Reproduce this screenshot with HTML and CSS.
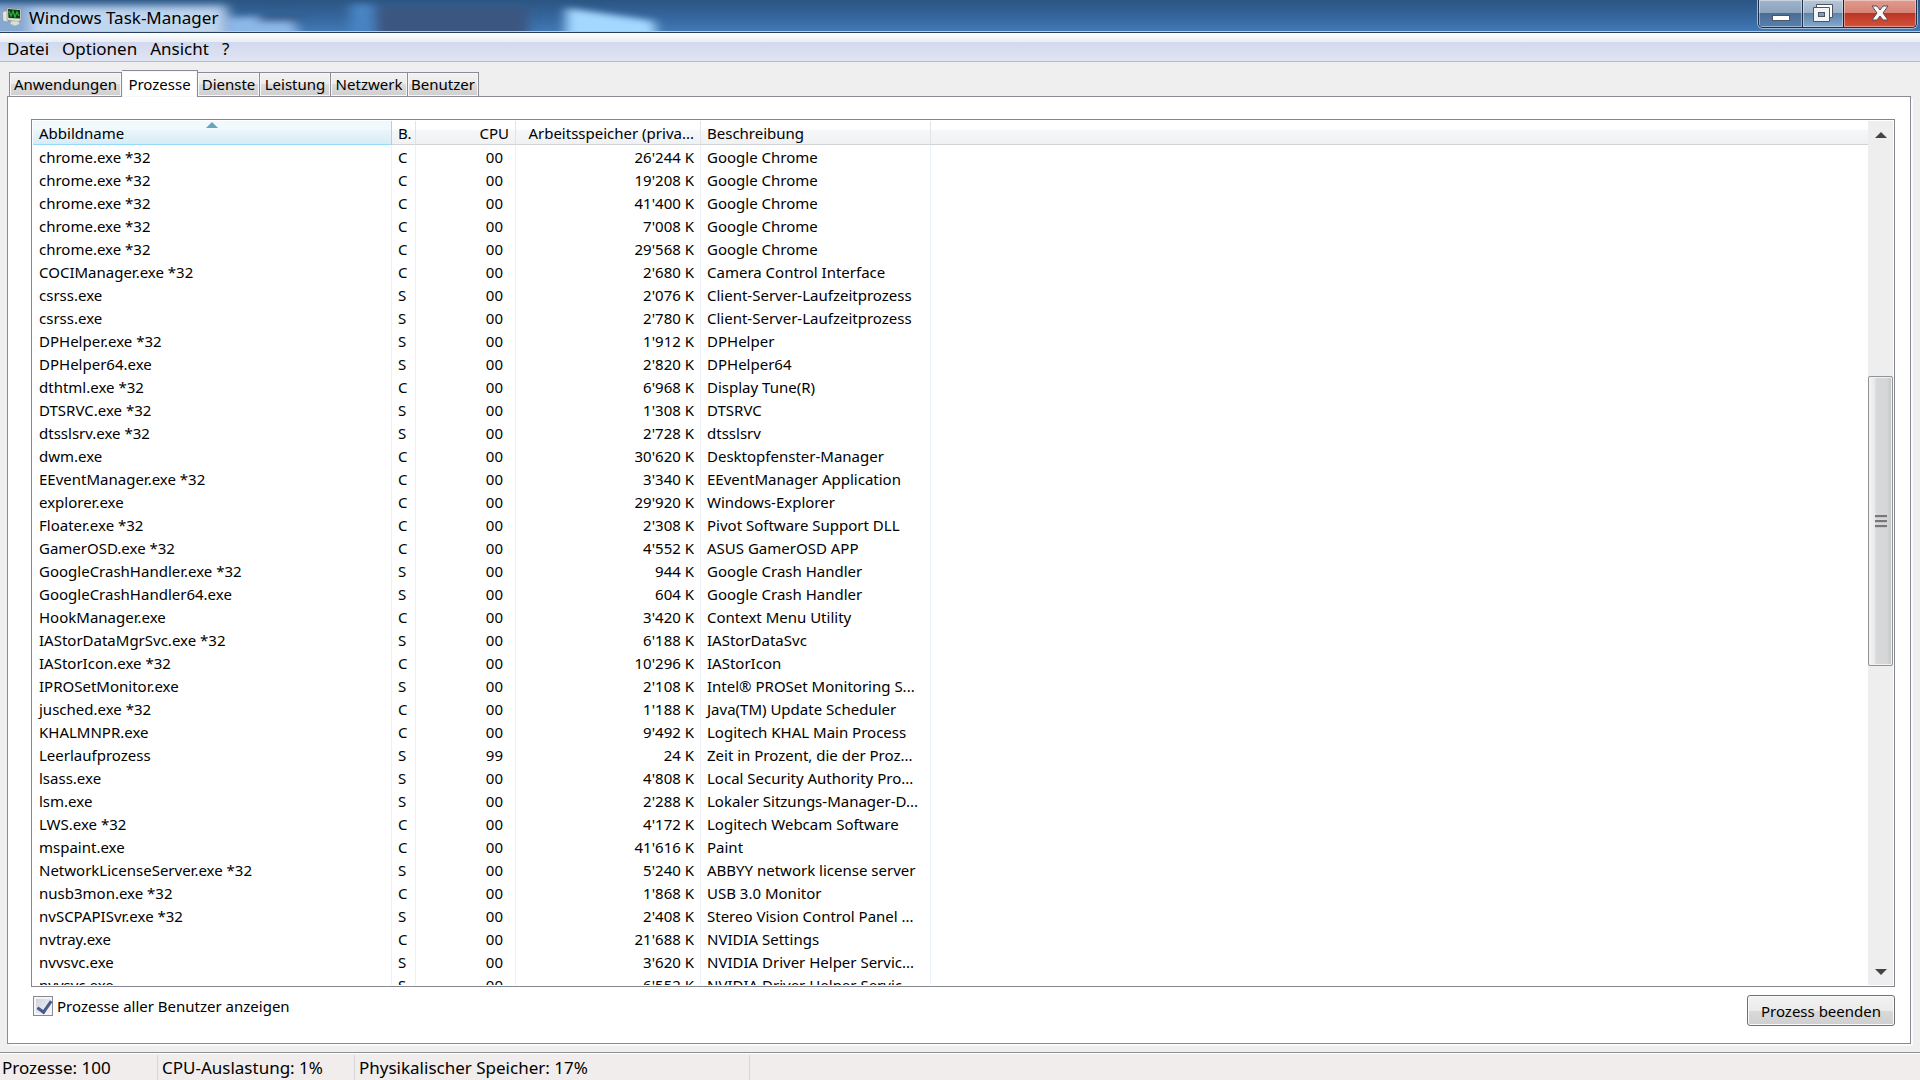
FILE: index.html
```
<!DOCTYPE html>
<html lang="de">

<head>
	<meta charset="UTF-8">
	<title>Windows Task-Manager</title>
	<link rel="stylesheet" href="styles.css">
</head>

<body>
	<div class="window">

		<header class="titlebar">
			<svg class="glass" width="960" height="32" viewBox="0 0 960 32" aria-hidden="true">
				<defs>
					<filter id="soft" filterUnits="userSpaceOnUse" x="-40" y="-40" width="1000" height="120">
						<feGaussianBlur stdDeviation="6 3" />
					</filter>
				</defs>
				<g filter="url(#soft)">
					<path d="M-30 4H226L246 50H-30Z" fill="#86a9d2" />
					<rect x="30" y="9" width="192" height="40" fill="#c0d6ee" />
					<path d="M232 18L290 14L306 50H220Z" fill="#8cb8e8" />
					<rect x="258" y="14" width="44" height="8" fill="#365b8a" />
					<rect x="350" y="4" width="24" height="46" fill="#4a83c2" />
					<rect x="376" y="6" width="152" height="46" fill="#3b5781" />
				</g>
				<path d="M566 8L654 21L660 60H566Z" fill="#a4d8ff" filter="url(#soft)" />
			</svg>
			<svg class="app-icon" width="20" height="20" viewBox="0 0 20 20" aria-hidden="true">
				<path d="M0.500 5L6 3V15L1 14Z" fill="#e4e6e2" stroke="#8b928d" stroke-width="0.600" />
				<path d="M5 1L19 2V13L16 15L5 13Z" fill="#dfe2dc" stroke="#7d8580" stroke-width="0.600" />
				<path d="M6 2L18 3V11.500L6.500 11Z" fill="#0b3d14" />
				<path d="M7 4L9 9L11 4L13 10L15 5L17 9" fill="none" stroke="#2fa83c" stroke-width="1.300" />
				<path d="M9 14H16L18 17L13 19L8 17Z" fill="#dcdfd9" stroke="#a0a6a1" stroke-width="0.600" />
			</svg>
			<h1 class="title">Windows Task-Manager</h1>
			<div class="controls">
				<button class="control minimize" type="button" aria-label="Minimieren">
					<svg width="18" height="20" viewBox="0 0 18 20">
						<rect x="0.500" y="11.500" width="17" height="5" fill="#fff" stroke="#4a5568" />
					</svg>
				</button>
				<button class="control restore" type="button" aria-label="Wiederherstellen">
					<svg width="20" height="20" viewBox="0 0 20 20">
						<path d="M3.500 0.500H19.500V13.500H3.500Z" fill="#fff" stroke="#4a5568" />
						<path d="M0.500 3.500H16.500V17.500H0.500Z" fill="#f4f4f4" stroke="#4a5568" />
						<rect x="5.500" y="8.500" width="6" height="4" fill="#7e9cc0" stroke="#4a5568" />
					</svg>
				</button>
				<button class="control close" type="button" aria-label="Schließen">
					<svg width="18" height="20" viewBox="0 0 18 20">
						<path d="M1 2H6L9 6L12 2H17L12 9L17 16H12L9 12L6 16H1L6 9Z" fill="#f7f7f7" stroke="#5a4a58" />
					</svg>
				</button>
			</div>
		</header>

		<nav class="menu">
			<button type="button">Datei</button>
			<button type="button">Optionen</button>
			<button type="button">Ansicht</button>
			<button type="button">?</button>
		</nav>

		<main class="content">
			<div class="tabs" role="tablist">
				<button class="tab tab-1" type="button" role="tab">Anwendungen</button>
				<button class="tab tab-2 active" type="button" role="tab" aria-selected="true">Prozesse</button>
				<button class="tab tab-3" type="button" role="tab">Dienste</button>
				<button class="tab tab-4" type="button" role="tab">Leistung</button>
				<button class="tab tab-5" type="button" role="tab">Netzwerk</button>
				<button class="tab tab-6" type="button" role="tab">Benutzer</button>
			</div>

			<section class="panel">
				<div class="list">
					<div class="list-view">
						<table class="processes">
							<colgroup>
								<col class="col-name">
								<col class="col-user">
								<col class="col-cpu">
								<col class="col-memory">
								<col class="col-text">
								<col>
							</colgroup>
							<thead>
								<tr>
									<th class="sorted">Abbildname</th>
									<th>B.</th>
									<th>CPU</th>
									<th>Arbeitsspeicher (priva...</th>
									<th>Beschreibung</th>
									<th></th>
								</tr>
							</thead>
							<tbody>
								<tr><td>chrome.exe *32</td><td>C</td><td>00</td><td>26'244 K</td><td>Google Chrome</td><td></td></tr>
								<tr><td>chrome.exe *32</td><td>C</td><td>00</td><td>19'208 K</td><td>Google Chrome</td><td></td></tr>
								<tr><td>chrome.exe *32</td><td>C</td><td>00</td><td>41'400 K</td><td>Google Chrome</td><td></td></tr>
								<tr><td>chrome.exe *32</td><td>C</td><td>00</td><td>7'008 K</td><td>Google Chrome</td><td></td></tr>
								<tr><td>chrome.exe *32</td><td>C</td><td>00</td><td>29'568 K</td><td>Google Chrome</td><td></td></tr>
								<tr><td>COCIManager.exe *32</td><td>C</td><td>00</td><td>2'680 K</td><td>Camera Control Interface</td><td></td></tr>
								<tr><td>csrss.exe</td><td>S</td><td>00</td><td>2'076 K</td><td>Client-Server-Laufzeitprozess</td><td></td></tr>
								<tr><td>csrss.exe</td><td>S</td><td>00</td><td>2'780 K</td><td>Client-Server-Laufzeitprozess</td><td></td></tr>
								<tr><td>DPHelper.exe *32</td><td>S</td><td>00</td><td>1'912 K</td><td>DPHelper</td><td></td></tr>
								<tr><td>DPHelper64.exe</td><td>S</td><td>00</td><td>2'820 K</td><td>DPHelper64</td><td></td></tr>
								<tr><td>dthtml.exe *32</td><td>C</td><td>00</td><td>6'968 K</td><td>Display Tune(R)</td><td></td></tr>
								<tr><td>DTSRVC.exe *32</td><td>S</td><td>00</td><td>1'308 K</td><td>DTSRVC</td><td></td></tr>
								<tr><td>dtsslsrv.exe *32</td><td>S</td><td>00</td><td>2'728 K</td><td>dtsslsrv</td><td></td></tr>
								<tr><td>dwm.exe</td><td>C</td><td>00</td><td>30'620 K</td><td>Desktopfenster-Manager</td><td></td></tr>
								<tr><td>EEventManager.exe *32</td><td>C</td><td>00</td><td>3'340 K</td><td>EEventManager Application</td><td></td></tr>
								<tr><td>explorer.exe</td><td>C</td><td>00</td><td>29'920 K</td><td>Windows-Explorer</td><td></td></tr>
								<tr><td>Floater.exe *32</td><td>C</td><td>00</td><td>2'308 K</td><td>Pivot Software Support DLL</td><td></td></tr>
								<tr><td>GamerOSD.exe *32</td><td>C</td><td>00</td><td>4'552 K</td><td>ASUS GamerOSD APP</td><td></td></tr>
								<tr><td>GoogleCrashHandler.exe *32</td><td>S</td><td>00</td><td>944 K</td><td>Google Crash Handler</td><td></td></tr>
								<tr><td>GoogleCrashHandler64.exe</td><td>S</td><td>00</td><td>604 K</td><td>Google Crash Handler</td><td></td></tr>
								<tr><td>HookManager.exe</td><td>C</td><td>00</td><td>3'420 K</td><td>Context Menu Utility</td><td></td></tr>
								<tr><td>IAStorDataMgrSvc.exe *32</td><td>S</td><td>00</td><td>6'188 K</td><td>IAStorDataSvc</td><td></td></tr>
								<tr><td>IAStorIcon.exe *32</td><td>C</td><td>00</td><td>10'296 K</td><td>IAStorIcon</td><td></td></tr>
								<tr><td>IPROSetMonitor.exe</td><td>S</td><td>00</td><td>2'108 K</td><td>Intel® PROSet Monitoring S...</td><td></td></tr>
								<tr><td>jusched.exe *32</td><td>C</td><td>00</td><td>1'188 K</td><td>Java(TM) Update Scheduler</td><td></td></tr>
								<tr><td>KHALMNPR.exe</td><td>C</td><td>00</td><td>9'492 K</td><td>Logitech KHAL Main Process</td><td></td></tr>
								<tr><td>Leerlaufprozess</td><td>S</td><td>99</td><td>24 K</td><td>Zeit in Prozent, die der Proz...</td><td></td></tr>
								<tr><td>lsass.exe</td><td>S</td><td>00</td><td>4'808 K</td><td>Local Security Authority Pro...</td><td></td></tr>
								<tr><td>lsm.exe</td><td>S</td><td>00</td><td>2'288 K</td><td>Lokaler Sitzungs-Manager-D...</td><td></td></tr>
								<tr><td>LWS.exe *32</td><td>C</td><td>00</td><td>4'172 K</td><td>Logitech Webcam Software</td><td></td></tr>
								<tr><td>mspaint.exe</td><td>C</td><td>00</td><td>41'616 K</td><td>Paint</td><td></td></tr>
								<tr><td>NetworkLicenseServer.exe *32</td><td>S</td><td>00</td><td>5'240 K</td><td>ABBYY network license server</td><td></td></tr>
								<tr><td>nusb3mon.exe *32</td><td>C</td><td>00</td><td>1'868 K</td><td>USB 3.0 Monitor</td><td></td></tr>
								<tr><td>nvSCPAPISvr.exe *32</td><td>S</td><td>00</td><td>2'408 K</td><td>Stereo Vision Control Panel ...</td><td></td></tr>
								<tr><td>nvtray.exe</td><td>C</td><td>00</td><td>21'688 K</td><td>NVIDIA Settings</td><td></td></tr>
								<tr><td>nvvsvc.exe</td><td>S</td><td>00</td><td>3'620 K</td><td>NVIDIA Driver Helper Servic...</td><td></td></tr>
								<tr><td>nvvsvc.exe</td><td>S</td><td>00</td><td>6'552 K</td><td>NVIDIA Driver Helper Servic...</td><td></td></tr>
							</tbody>
						</table>
					</div>
					<div class="scrollbar">
						<button class="arrow" type="button" aria-label="Nach oben">
							<svg width="12" height="6" viewBox="0 0 12 6">
								<path d="M6 0L12 6H0Z" fill="#444" />
							</svg>
						</button>
						<div class="track">
							<div class="thumb"><i></i><i></i><i></i></div>
						</div>
						<button class="arrow" type="button" aria-label="Nach unten">
							<svg width="12" height="6" viewBox="0 0 12 6">
								<path d="M0 0H12L6 6Z" fill="#444" />
							</svg>
						</button>
					</div>
				</div>

				<div class="actions">
					<label class="check">
						<input type="checkbox" checked>
						<span>Prozesse aller Benutzer anzeigen</span>
					</label>
					<button class="end" type="button">Prozess beenden</button>
				</div>
			</section>
		</main>

		<footer class="status">
			<div class="cell cell-1">Prozesse: 100</div>
			<div class="cell cell-2">CPU-Auslastung: 1%</div>
			<div class="cell cell-3">Physikalischer Speicher: 17%</div>
		</footer>

	</div>
</body>

</html>
```
FILE: styles.css
```
* {
	box-sizing: border-box;
}

body {
	margin: 0;
	font-family: "Noto Sans", "Open Sans", sans-serif;
	font-size: 15px;
	color: #000;
	overflow: hidden;
}

button {
	margin: 0;
	padding: 0;
	border: 0;
	background: none;
	font: inherit;
	color: inherit;
}

svg {
	display: block;
}

.window {
	display: flex;
	flex-direction: column;
	height: 100vh;
	background: #efefef;
}

/* title bar */

.titlebar {
	position: relative;
	display: flex;
	align-items: center;
	height: 33px;
	padding: 2px 3px 0 2px;
	background: linear-gradient(#2b5582, #34659c 50%, #4279b5);
	border-bottom: 1px solid #27405e;
	overflow: hidden;
}

.titlebar:after {
	content: "";
	position: absolute;
	left: 0;
	right: 0;
	bottom: 0;
	height: 1px;
	background: #b4cde6;
}

.glass {
	position: absolute;
	left: 0;
	top: 0;
}

.app-icon {
	position: relative;
}

.title {
	position: relative;
	margin: 2px 0 0 7px;
	font-size: 17px;
	line-height: 24px;
	font-weight: normal;
}

.controls {
	position: relative;
	display: flex;
	align-self: flex-start;
	height: 28px;
	margin-top: -2px;
	margin-left: auto;
	border: 1px solid #1f3047;
	border-top: 0;
	border-radius: 0 0 5px 5px;
	box-shadow: 0 0 0 1px #9db8d3;
	overflow: hidden;
}

.control {
	display: flex;
	justify-content: center;
	align-items: center;
	width: 41px;
	box-shadow: inset 0 0 0 1px rgba(255, 255, 255, 0.4);
}

.minimize {
	width: 43px;
	background: linear-gradient(#a0b4cb, #8ba3bf 48%, #4c6c92 50%, #5680ae);
}

.restore {
	border-left: 1px solid #1f3047;
	background: linear-gradient(#b8c6d6, #9cb2c9 48%, #6283a8 50%, #82a9cf);
}

.close {
	width: 73px;
	border-left: 1px solid #3a1010;
	background: linear-gradient(#e09a8e, #d68376 48%, #bb3524 50%, #d4533a);
}

/* menu */

.menu {
	display: flex;
	align-items: center;
	gap: 13px;
	height: 29px;
	padding: 2px 7px 0 7px;
	border-bottom: 1px solid #b6bcd5;
	background: linear-gradient(#fff, #e9edf6 9px, #d2d9ec 9px, #e0e5f4);
	font-size: 17px;
}

/* tabs */

.content {
	flex: 1;
	display: flex;
	flex-direction: column;
	min-height: 0;
	padding: 8px 9px 8px 7px;
}

.tabs {
	display: flex;
	align-items: flex-end;
	height: 27px;
	padding-left: 2px;
	margin-bottom: -1px;
	z-index: 1;
}

.tab {
	height: 25px;
	border: 1px solid #898c95;
	border-left: 0;
	background: linear-gradient(#f2f2f2, #ebebeb 50%, #dcdcdc 50%, #cfcfcf);
	box-shadow: inset 0 0 0 1px #f7f7f7;
	line-height: 23px;
}

.tab-1 {
	width: 113px;
	border-left: 1px solid #898c95;
}

.tab-2 {
	width: 76px;
}

.tab-3 {
	width: 62px;
}

.tab-4 {
	width: 71px;
}

.tab-5 {
	width: 77px;
}

.tab-6 {
	width: 71px;
}

.tab.active {
	height: 27px;
	border-bottom: 0;
	background: #fff;
}

.panel {
	flex: 1;
	display: flex;
	flex-direction: column;
	min-height: 0;
	padding: 22px 15px 17px 23px;
	border: 1px solid #898c95;
	background: #fff;
	box-shadow: 2px 2px #fafafa;
}

/* process list */

.list {
	flex: 1;
	display: flex;
	min-height: 0;
	padding: 1px;
	border: 1px solid #828790;
}

.list-view {
	flex: 1;
	min-width: 0;
	overflow: hidden;
}

.processes {
	width: 100%;
	table-layout: fixed;
	border-collapse: separate;
	border-spacing: 0;
}

.col-name {
	width: 359px;
}

.col-user {
	width: 24px;
}

.col-cpu {
	width: 100px;
}

.col-memory {
	width: 185px;
}

.col-text {
	width: 230px;
}

.processes th,
.processes td {
	height: 23px;
	padding: 2px 6px 0 6px;
	border-right: 1px solid #ebf1fa;
	line-height: 21px;
	font-weight: normal;
	text-align: left;
	white-space: nowrap;
}

.processes th {
	position: relative;
	height: 24px;
	border-right-color: #dfe3ea;
	border-bottom: 1px solid #d0d2d6;
	background: linear-gradient(#fff 9px, #f6f7f9 9px, #eff1f3);
}

.processes th.sorted {
	border-color: #96d9f9;
	background: linear-gradient(#f2f9fc 9px, #e9f5fb 9px, #d8ecf6);
}

.processes th.sorted:after {
	content: "";
	position: absolute;
	top: 1px;
	left: 50%;
	margin-left: -6px;
	border: 6px solid transparent;
	border-top: 0;
	border-bottom: 6px solid #6ba3bf;
}

.processes th:last-child,
.processes td:last-child {
	border-right: 0;
}

.processes td:nth-child(3) {
	padding-right: 12px;
	text-align: right;
}

.processes th:nth-child(3),
.processes th:nth-child(4),
.processes td:nth-child(4) {
	text-align: right;
}

.processes th:nth-child(2) {
	padding-right: 0;
}

/* scroll bar */

.scrollbar {
	display: flex;
	flex-direction: column;
	width: 25px;
	background: #eee;
}

.arrow {
	display: flex;
	justify-content: center;
	align-items: center;
	height: 27px;
}

.track {
	flex: 1;
}

.thumb {
	display: flex;
	flex-direction: column;
	justify-content: center;
	align-items: center;
	gap: 2px;
	height: 290px;
	margin-top: 228px;
	border: 1px solid #8f9296;
	border-radius: 2px;
	background: linear-gradient(90deg, #f5f5f5, #e8e8e9 6px, #d7d8da 7px, #d5d6d8 18px, #c2c3c5);
	box-shadow: inset 0 0 0 1px #f2f2f2;
}

.thumb i {
	width: 12px;
	height: 3px;
	border-top: 2px solid #77777b;
	border-bottom: 1px solid #c8c8cb;
}

/* below the list */

.actions {
	display: flex;
	justify-content: space-between;
	align-items: flex-start;
	padding-top: 8px;
}

.check {
	display: flex;
	align-items: center;
	gap: 4px;
	padding: 1px 0 0 2px;
}

.check input {
	appearance: none;
	width: 20px;
	height: 20px;
	margin: 0;
	border: 1px solid #8a8b8e;
	background:
		linear-gradient(135deg, #cfd4dc, #f2f4f7) content-box,
		#f4f4f4;
	padding: 2px;
	position: relative;
}

.check input:checked:after {
	content: "";
	position: absolute;
	top: 1px;
	left: 6px;
	width: 6px;
	height: 12px;
	border: solid #47598f;
	border-width: 0 3px 3px 0;
	transform: rotate(35deg);
}

.end {
	width: 148px;
	height: 31px;
	border: 1px solid #707070;
	border-radius: 3px;
	background: linear-gradient(#f2f2f2, #ebebeb 50%, #dadada 50%, #cfcfcf);
	box-shadow: inset 0 0 0 1px #fafafa;
}

/* status bar */

.status {
	display: flex;
	height: 28px;
	border-top: 1px solid #8e8f93;
	background: #f0edec;
	box-shadow: inset 0 1px #fff;
	font-size: 17px;
}

.cell {
	margin-top: 2px;
	padding-left: 4px;
	border-right: 1px solid #d7d7d7;
	white-space: nowrap;
	line-height: 25px;
}

.cell-1 {
	width: 158px;
	padding-left: 2px;
}

.cell-2 {
	width: 197px;
}

.cell-3 {
	width: 395px;
}
```
